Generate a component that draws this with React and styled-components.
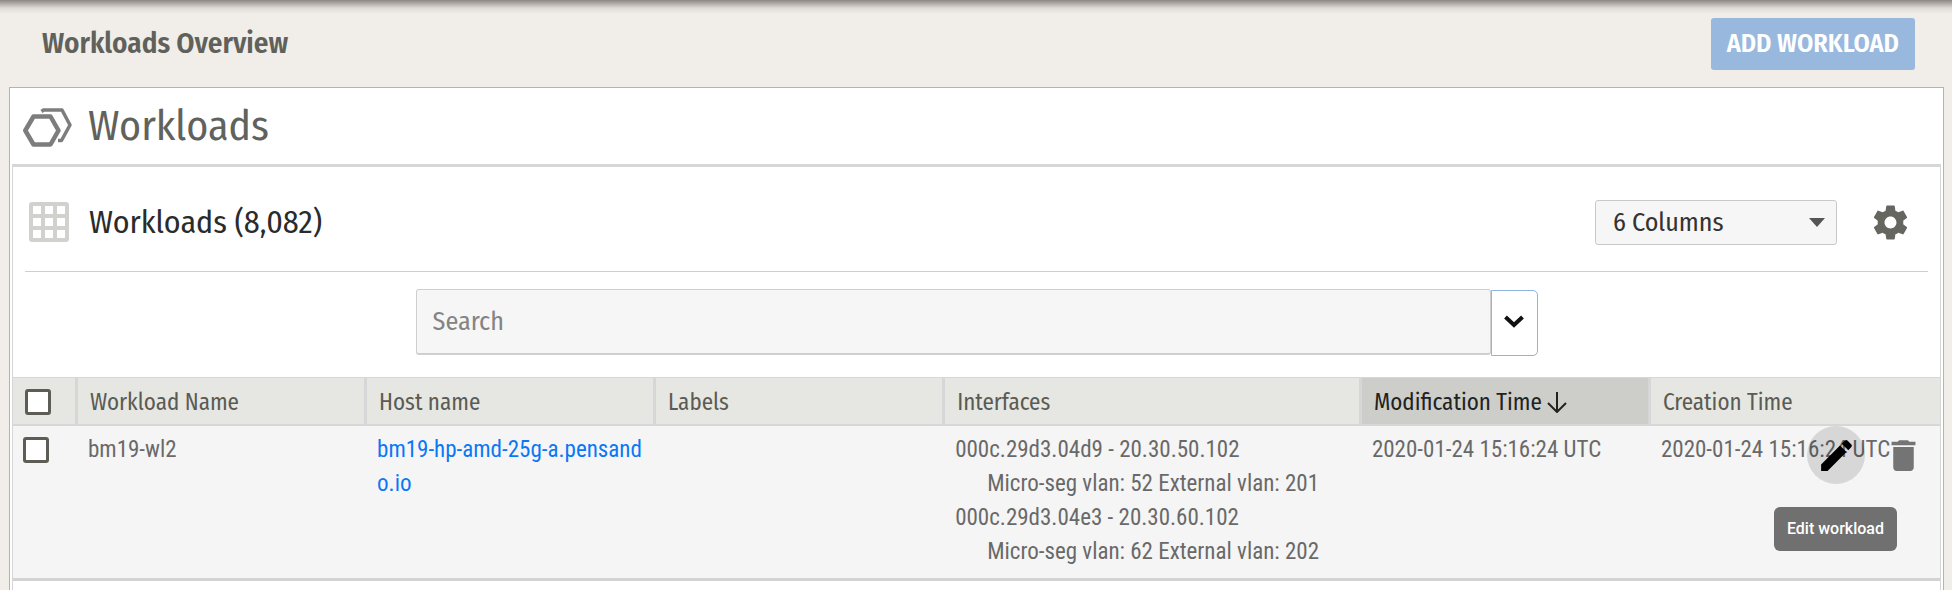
import React from "react";
import styled, { createGlobalStyle } from "styled-components";

const fira = '"Fira Sans Condensed", "Roboto Condensed", Roboto, sans-serif';
const roboto = '"Roboto Condensed", "Fira Sans Condensed", Roboto, sans-serif';

const GlobalStyle = createGlobalStyle`
  *, *::before, *::after { box-sizing: border-box; }
  body {
    margin: 0;
    background: #f1eeea;
    color: #61615b;
    font-family: ${fira};
    -webkit-font-smoothing: antialiased;
  }
  button, input, select { font: inherit; color: inherit; }
  h1, h2, h3 { margin: 0; font-weight: 400; }
`;

const Page = styled.div`
  min-height: 100vh;
  display: flex;
  flex-direction: column;
`;

const Header = styled.header`
  display: flex;
  align-items: center;
  justify-content: space-between;
  height: 87px;
  padding: 1px 37px 0 42px;
  background: linear-gradient(#8f8680, #aaa6a2 3px, #dedbd7 8px, #f1eeea 14px);
`;

const PageTitle = styled.h1`
  && { font-weight: 600; }
  font-size: 29px;
  line-height: 34px;
`;

const AddButton = styled.button`
  height: 52px;
  padding: 0 16px;
  border: 0;
  border-radius: 3px;
  background: #98b8de;
  color: #fff;
  font-size: 26px;
  font-weight: 600;
  line-height: 34px;
`;

const Panel = styled.main`
  flex: 1;
  display: flex;
  flex-direction: column;
  margin: 0 8px 0 9px;
  border: 1px solid #b3b3b1;
  border-bottom: 0;
  background: #fff;
`;

const PanelTitle = styled.div`
  display: flex;
  align-items: center;
  gap: 16px;
  height: 76px;
  padding: 0 13px;
  color: #61625c;

  h2 { font-size: 42px; line-height: 52px; }
`;

const TableCard = styled.section`
  flex: 1;
  margin: 0 2px;
  border: 1px solid #d5d6d6;
  border-top-width: 3px;
  border-bottom: 0;
`;

const Toolbar = styled.div`
  display: flex;
  align-items: center;
  height: 105px;
  margin: 0 12px;
  padding: 6px 17px 0 4px;
  border-bottom: 1px solid #cfcfcf;

  h3 {
    flex: 1;
    margin-left: 20px;
    color: #2b2b2b;
    font-size: 32px;
    line-height: 40px;
  }
`;

const ColumnPicker = styled.label`
  display: grid;
  align-items: center;
  width: 242px;

  select, svg { grid-area: 1 / 1; }
  select {
    appearance: none;
    height: 45px;
    padding: 0 17px;
    border: 1px solid #c9c9c9;
    border-radius: 3px;
    background: #f6f6f6;
    color: #333;
    font-size: 26px;
  }
  svg {
    justify-self: end;
    margin-right: 12px;
    pointer-events: none;
  }
`;

const IconButton = styled.button`
  display: flex;
  padding: 0;
  border: 0;
  background: none;
  color: ${(p) => p.$color || "#666661"};
`;

const SettingsButton = styled(IconButton)`
  margin-left: 33px;
`;

const SearchBar = styled.form`
  display: flex;
  align-items: flex-end;
  width: 1122px;
  max-width: 100%;
  margin: 17px auto 21px;
`;

const SearchInput = styled.input`
  flex: 1;
  min-width: 0;
  height: 66px;
  margin-bottom: 1px;
  padding: 0 16px;
  border: 1px solid #cfcfcf;
  border-bottom-width: 2px;
  border-radius: 3px;
  background: #f6f6f6;
  font-size: 26px;

  &::placeholder { color: #848484; opacity: 1; }
`;

const SearchToggle = styled.button`
  display: flex;
  align-items: center;
  justify-content: center;
  width: 47px;
  height: 66px;
  padding: 0 0 4px;
  border: 1px solid #8db4e2;
  border-radius: 0 5px 5px 0;
  background: #fff;
`;

const Table = styled.table`
  width: 100%;
  table-layout: fixed;
  border-collapse: separate;
  border-spacing: 0;
`;

const HeadCell = styled.th`
  width: ${(p) => p.$width || "auto"};
  height: 49px;
  padding: 2px 9px 0 12px;
  border: solid #d6d7d6;
  border-width: 1px 3px 2px 0;
  background: ${(p) => (p.$sorted ? "#cdcec9" : "#e6e7e2")};
  color: ${(p) => (p.$sorted ? "#222" : "#5b5b55")};
  font-size: 23px;
  font-weight: 400;
  line-height: 30px;
  text-align: left;
  white-space: nowrap;

  &:last-child { border-right-width: 0; }
  svg { margin-left: 5px; vertical-align: -3px; }
`;

const Cell = styled.td`
  position: relative;
  height: 155px;
  padding: 7px 10px 5px;
  border-bottom: 3px solid #d3d3d3;
  background: #f5f5f5;
  color: #696969;
  font-family: ${roboto};
  font-size: 23px;
  line-height: 34px;
  vertical-align: top;
  white-space: ${(p) => (p.$wrap ? "normal" : "nowrap")};
  word-break: break-all;

  a { color: #0a78f5; text-decoration: none; }
`;

const Checkbox = styled.input.attrs({ type: "checkbox" })`
  appearance: none;
  display: block;
  width: 26px;
  height: 26px;
  margin: ${(p) => (p.$row ? "4px 0 0" : "0")};
  border: 3px solid #5d5d56;
  border-radius: 3px;
  background: #fff;
`;

const Vlan = styled.div`
  padding-left: 32px;
`;

const RowActions = styled.div`
  position: absolute;
  top: 0;
  right: 16px;
  display: flex;
  align-items: center;
  gap: 18px;
`;

const EditButton = styled(IconButton)`
  align-items: center;
  justify-content: center;
  width: 58px;
  height: 58px;
  border-radius: 50%;
  background: rgba(0, 0, 0, 0.12);
`;

const Tooltip = styled.div`
  position: absolute;
  top: 81px;
  right: 43px;
  height: 44px;
  padding: 0 13px;
  border-radius: 6px;
  background: #707070;
  color: #fff;
  font-family: Roboto, sans-serif;
  font-size: 16px;
  font-weight: 500;
  line-height: 44px;
`;

const Icon = ({ size, children }) => (
  <svg width={size} height={size} viewBox="0 0 24 24" fill="currentColor" aria-hidden="true">
    {children}
  </svg>
);

const WorkloadsIcon = () => (
  <svg width="49" height="44" viewBox="0 0 49 44" fill="none" stroke="#7d7d7d" strokeWidth="4" strokeLinejoin="round" aria-hidden="true">
    <path d="M10.500 12.500H27.500L35.500 26.500L27.500 40.500H10.500L2.300 26.500Z" strokeWidth="4.500" />
    <path d="M18.500 7.500L20.500 6H39L47 21L38.500 36.500H35" strokeWidth="3.500" />
  </svg>
);

const GridIcon = () => (
  <svg width="40" height="40" viewBox="0 0 40 40" aria-hidden="true">
    <path
      fill="#d1d1ce"
      fillRule="evenodd"
      d="M3 0H37Q40 0 40 3V37Q40 40 37 40H3Q0 40 0 37V3Q0 0 3 0ZM4 4V12H12V4ZM16 4V12H24V4ZM28 4V12H36V4ZM4 16V24H12V16ZM16 16V24H24V16ZM28 16V24H36V16ZM4 28V36H12V28ZM16 28V36H24V28ZM28 28V36H36V28Z"
    />
  </svg>
);

const columns = [
  { name: "Workload Name", width: "15%" },
  { name: "Host name", width: "15%" },
  { name: "Labels", width: "15%" },
  { name: "Interfaces" },
  { name: "Modification Time", width: "15%", sorted: true },
  { name: "Creation Time", width: "15%" },
];

const interfaces = [
  { name: "000c.29d3.04d9 - 20.30.50.102", vlan: "Micro-seg vlan: 52 External vlan: 201" },
  { name: "000c.29d3.04e3 - 20.30.60.102", vlan: "Micro-seg vlan: 62 External vlan: 202" },
];

export default function App() {
  return (
    <Page>
      <GlobalStyle />
      <Header>
        <PageTitle>Workloads Overview</PageTitle>
        <AddButton type="button">ADD WORKLOAD</AddButton>
      </Header>
      <Panel>
        <PanelTitle>
          <WorkloadsIcon />
          <h2>Workloads</h2>
        </PanelTitle>
        <TableCard>
          <Toolbar>
            <GridIcon />
            <h3>Workloads (8,082)</h3>
            <ColumnPicker>
              <select aria-label="Columns">
                <option>6 Columns</option>
              </select>
              <svg width="16" height="9" viewBox="0 0 16 9" fill="#555" aria-hidden="true">
                <path d="M0 0H16L8 9Z" />
              </svg>
            </ColumnPicker>
            <SettingsButton type="button" aria-label="Table settings">
              <Icon size={41}>
                <path d="M19.430 12.980c.04-.32.07-.64.07-.98s-.03-.66-.07-.98l2.110-1.650c.19-.15.24-.42.12-.64l-2-3.460c-.12-.22-.39-.3-.61-.22l-2.490 1c-.52-.4-1.080-.73-1.690-.98l-.38-2.650C14.460 2.180 14.250 2 14 2h-4c-.25 0-.46.18-.49.42l-.38 2.650c-.61.25-1.170.59-1.690.98l-2.490-1c-.23-.09-.49 0-.61.22l-2 3.460c-.13.22-.07.49.12.64l2.110 1.650c-.04.32-.07.65-.07.98s.03.66.07.98l-2.110 1.650c-.19.15-.24.42-.12.64l2 3.460c.12.22.39.3.61.22l2.490-1c.52.4 1.080.73 1.690.98l.38 2.650c.03.24.24.42.49.42h4c.25 0 .46-.18.49-.42l.38-2.650c.61-.25 1.170-.59 1.690-.98l2.490 1c.23.09.49 0 .61-.22l2-3.460c.12-.22.07-.49-.12-.64l-2.110-1.650zM12 15.500c-1.930 0-3.500-1.570-3.500-3.500s1.570-3.500 3.500-3.500 3.500 1.570 3.500 3.500-1.570 3.500-3.500 3.500z" />
              </Icon>
            </SettingsButton>
          </Toolbar>
          <SearchBar role="search">
            <SearchInput type="text" placeholder="Search" aria-label="Search" />
            <SearchToggle type="button" aria-label="Advanced search">
              <svg width="20" height="13" viewBox="0 0 20 13" fill="none" stroke="#111" strokeWidth="4" aria-hidden="true">
                <path d="M1.500 2L10 10L18.500 2" />
              </svg>
            </SearchToggle>
          </SearchBar>
          <Table>
            <thead>
              <tr>
                <HeadCell $width="65px">
                  <Checkbox aria-label="Select all workloads" />
                </HeadCell>
                {columns.map((c) => (
                  <HeadCell key={c.name} $width={c.width} $sorted={c.sorted}>
                    {c.name}
                    {c.sorted && (
                      <svg width="20" height="21" viewBox="0 0 20 21" fill="none" stroke="#222" strokeWidth="2" aria-hidden="true">
                        <path d="M10 0V20M1 11L10 20L19 11" />
                      </svg>
                    )}
                  </HeadCell>
                ))}
              </tr>
            </thead>
            <tbody>
              <tr>
                <Cell>
                  <Checkbox $row aria-label="Select bm19-wl2" />
                </Cell>
                <Cell>bm19-wl2</Cell>
                <Cell $wrap>
                  <a href="#host">bm19-hp-amd-25g-a.pensando.io</a>
                </Cell>
                <Cell />
                <Cell>
                  {interfaces.map((i) => (
                    <React.Fragment key={i.name}>
                      <div>{i.name}</div>
                      <Vlan>{i.vlan}</Vlan>
                    </React.Fragment>
                  ))}
                </Cell>
                <Cell>2020-01-24 15:16:24 UTC</Cell>
                <Cell>
                  2020-01-24 15:16:24 UTC
                  <RowActions>
                    <EditButton type="button" aria-label="Edit workload" $color="#000">
                      <Icon size={41}>
                        <path d="M3 17.250V21h3.750L17.810 9.940l-3.750-3.750L3 17.250zM20.710 7.040c.39-.39.39-1.020 0-1.410l-2.340-2.340c-.39-.39-1.020-.39-1.410 0l-1.830 1.830 3.750 3.750 1.830-1.830z" />
                      </Icon>
                    </EditButton>
                    <IconButton type="button" aria-label="Delete workload" $color="#747474">
                      <Icon size={41}>
                        <path d="M6 19c0 1.100.9 2 2 2h8c1.100 0 2-.9 2-2V7H6v12zM19 4h-3.500l-1-1h-5l-1 1H5v2h14V4z" />
                      </Icon>
                    </IconButton>
                  </RowActions>
                  <Tooltip role="tooltip">Edit workload</Tooltip>
                </Cell>
              </tr>
            </tbody>
          </Table>
        </TableCard>
      </Panel>
    </Page>
  );
}
